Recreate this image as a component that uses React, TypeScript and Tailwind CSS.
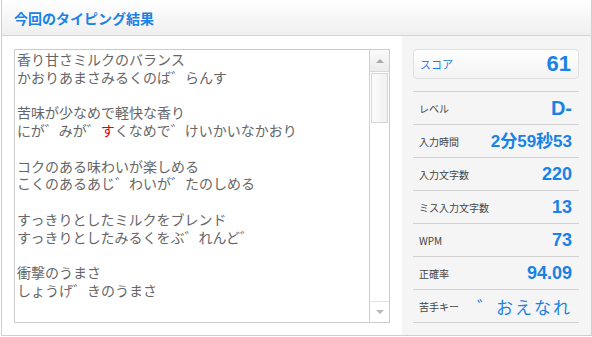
import React from 'react';

const jp = { fontFamily: '"Noto Sans CJK JP", "Noto Sans", sans-serif' };
const num = '[font-family:"Liberation_Sans","Noto_Sans_CJK_JP",sans-serif]';

const lines: React.ReactNode[] = [
  '香り甘さミルクのバランス',
  'かおりあまさみるくのば゛らんす',
  '',
  '苦味が少なめで軽快な香り',
  <>にが゛みが゛<span className="text-[#e00000]">す</span>くなめで゛けいかいなかおり</>,
  '',
  'コクのある味わいが楽しめる',
  'こくのあるあじ゛わいが゛たのしめる',
  '',
  'すっきりとしたミルクをブレンド',
  'すっきりとしたみるくをぶ゛れんど゛',
  '',
  '衝撃のうまさ',
  'しょうげ゛きのうまさ',
];

const rows = [
  { label: 'レベル', value: 'D-', cls: `text-[20px] font-bold ${num}` },
  { label: '入力時間', value: '2分59秒53', cls: `text-[17px] font-bold ${num}` },
  { label: '入力文字数', value: '220', cls: `text-[18px] font-bold ${num}` },
  { label: 'ミス入力文字数', value: '13', cls: `text-[18px] font-bold ${num}` },
  { label: 'WPM', value: '73', cls: `text-[18px] font-bold ${num}` },
  { label: '正確率', value: '94.09', cls: `text-[18px] font-bold ${num}` },
  { label: '苦手キー', value: '゛おえなれ', cls: 'text-[17px] tracking-[2px]' },
];

export default function App() {
  return (
    <div className="w-[592px] h-[337px] bg-white" style={jp}>
      <div className="ml-px w-[591px] h-[336px] border border-t-0 border-[#cfcfcf] flex flex-col">
        {/* Header */}
        <div className="h-[36px] shrink-0 border-b border-[#d4d4d4] bg-gradient-to-b from-white to-[#efefef] flex items-center pl-[12px]">
          <h2 className="text-[14px] font-bold text-[#1a82e6] leading-none">今回のタイピング結果</h2>
        </div>

        <div className="flex flex-1 min-h-0">
          {/* Text area */}
          <div className="pl-[12px] pt-[13px] pb-[12px] pr-[12px]">
            <div className="w-[376px] h-[274px] border border-[#cccccc] flex">
              <div className="flex-1 pl-[2px] pt-[1px] overflow-hidden text-[14px] leading-[17.75px] text-[#666] whitespace-nowrap">
                {lines.map((l, i) => (
                  <div key={i} className="h-[17.75px]">{l}</div>
                ))}
              </div>
              {/* Scrollbar */}
              <div className="w-[20px] border-l border-[#d0d0d0] flex flex-col bg-white">
                <div className="h-[22px] bg-gradient-to-b from-[#fafafa] to-[#ececec] border-b border-[#d8d8d8] flex items-center justify-center">
                  <div className="w-0 h-0 border-l-[4px] border-r-[4px] border-b-[4px] border-l-transparent border-r-transparent border-b-[#a8a8a8]" />
                </div>
                <div className="mx-px mt-px h-[50px] border border-[#d6d6d6] bg-gradient-to-r from-[#fcfcfc] to-[#f0f0f0]" />
                <div className="flex-1" />
                <div className="h-[21px] border-t border-[#e2e2e2] flex items-center justify-center">
                  <div className="w-0 h-0 border-l-[4px] border-r-[4px] border-t-[4px] border-l-transparent border-r-transparent border-t-[#b8b8b8]" />
                </div>
              </div>
            </div>
          </div>

          {/* Stats panel */}
          <div className="flex-1 bg-[#f5f5f5] pl-[11px] pr-[12px] pt-[13px]">
            <div className="h-[30px] rounded-[4px] border border-[#e0e0e0] bg-gradient-to-b from-white to-[#f3f3f3] flex items-center justify-between pl-[6px] pr-[7px]">
              <span className="text-[11px] text-[#1a82e6]">スコア</span>
              <span className={`text-[22px] font-bold text-[#1a82e6] leading-none ${num}`}>61</span>
            </div>
            <div className="mt-[12px] border-t border-[#d2d2d2]">
              {rows.map((r) => (
                <div key={r.label} className="h-[33px] border-b border-[#d2d2d2] flex items-center justify-between pl-[6px] pr-[7px]">
                  <span className="text-[10px] text-[#444]">{r.label}</span>
                  <span className={`${r.cls} text-[#1a82e6] leading-none`}>{r.value}</span>
                </div>
              ))}
            </div>
          </div>
        </div>
      </div>
    </div>
  );
}
